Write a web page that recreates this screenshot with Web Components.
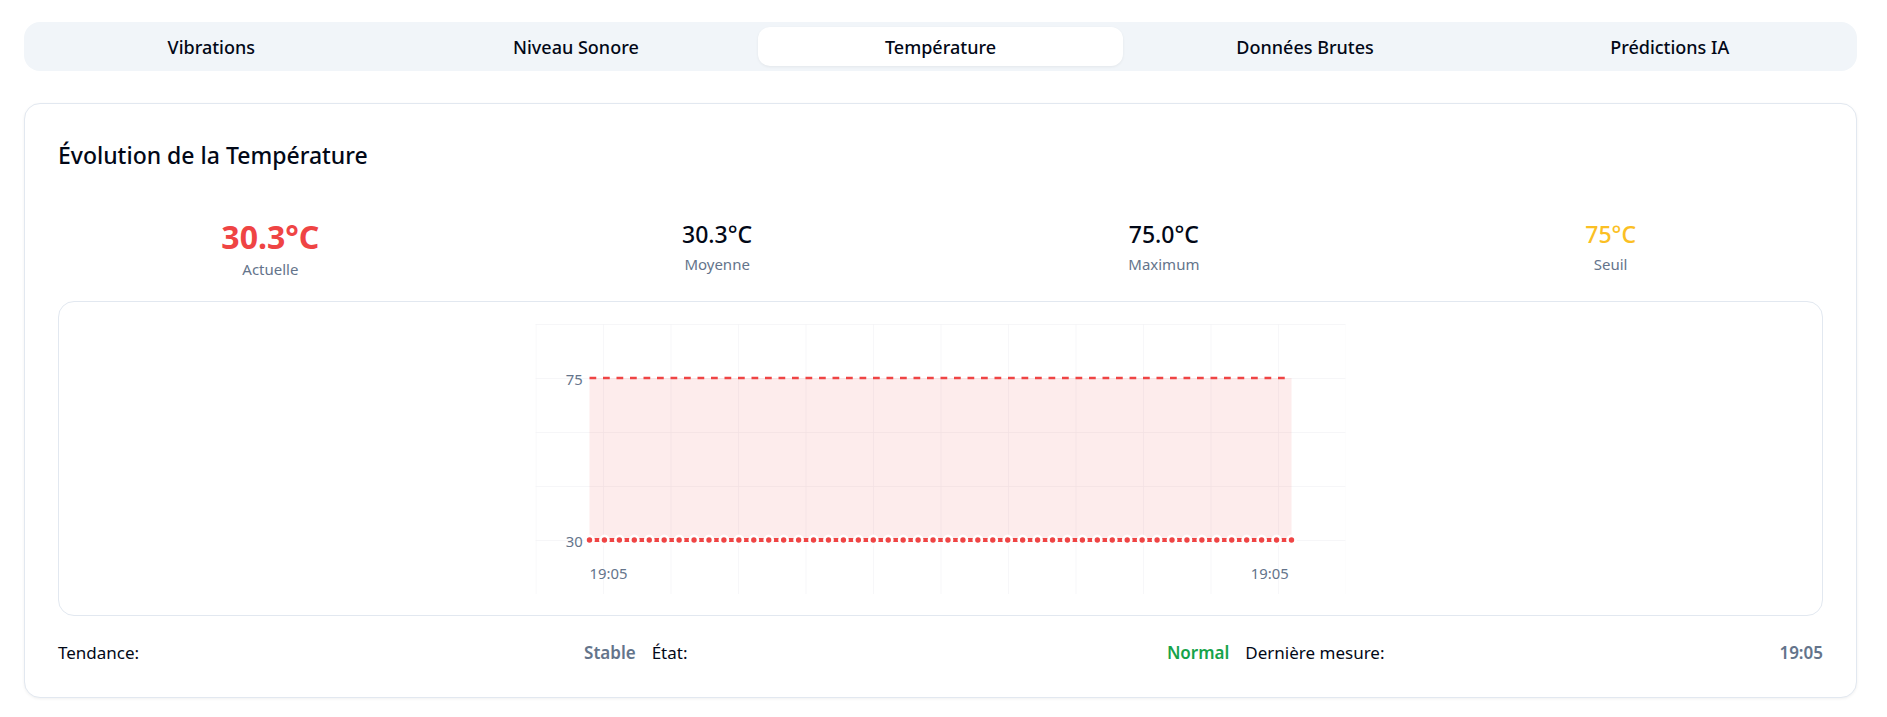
<!DOCTYPE html>
<html lang="fr">
<head>
<meta charset="utf-8">
<meta name="viewport" content="width=device-width, initial-scale=1">
<title>Évolution de la Température</title>
<style>
  :root {
    --fg: #020817;
    --muted: #64748b;
    --border: #e2e8f0;
    --tabs: #f1f5f9;
    --red: #ef4444;
    --amber: #fbbf24;
    --green: #16a34a;
  }
  body {
    margin: 0;
    background: #fff;
    color: var(--fg);
    font-family: "Noto Sans", "Segoe UI", sans-serif;
    font-size: 17px;
    line-height: 28px;
  }
</style>
</head>
<body>
<sensor-dashboard></sensor-dashboard>

<script>
class BaseElement extends HTMLElement {
  connectedCallback() {
    if (this.shadowRoot) return;
    this.attachShadow({ mode: 'open' }).innerHTML = this.render();
  }
}

customElements.define('tab-bar', class extends BaseElement {
  render() {
    return `
      <style>
        :host { display: block; }
        [role=tablist] {
          display: grid;
          grid-auto-flow: column;
          grid-auto-columns: 1fr;
          padding: 5px;
          background: var(--tabs);
          border-radius: 16px;
        }
      </style>
      <div role="tablist"><slot></slot></div>`;
  }
});

customElements.define('tab-item', class extends BaseElement {
  render() {
    const on = this.hasAttribute('selected');
    return `
      <style>
        :host { display: block; min-width: 0; }
        button {
          display: block;
          width: 100%;
          height: 39px;
          padding: 0 16px;
          border: 0;
          border-radius: 12px;
          background: transparent;
          color: var(--fg);
          font-family: inherit;
          font-size: 18px;
          font-weight: 500;
          line-height: 28px;
          white-space: nowrap;
          cursor: pointer;
        }
        button[aria-selected=true] {
          background: #fff;
          box-shadow: 0 1px 3px rgba(0, 0, 0, .06);
        }
      </style>
      <button type="button" role="tab" aria-selected="${on}"><slot></slot></button>`;
  }
});

customElements.define('panel-card', class extends BaseElement {
  render() {
    return `
      <style>
        :host {
          display: block;
          padding: 35px 33px 30px;
          border: 1px solid var(--border);
          border-radius: 16px;
          background: #fff;
          box-shadow: 0 1px 3px rgba(0, 0, 0, .06);
        }
        h3 { margin: 0 0 44px; font-size: 23px; font-weight: 500; line-height: 32px; }
      </style>
      <h3><slot name="title"></slot></h3>
      <slot></slot>`;
  }
});

customElements.define('stat-value', class extends BaseElement {
  render() {
    return `
      <style>
        :host { display: block; text-align: center; }
        .value { font-size: 23px; font-weight: 500; line-height: 38px; }
        :host([size=large]) .value { font-size: 32px; font-weight: 700; line-height: 43px; }
        :host([tone=red]) .value { color: var(--red); }
        :host([tone=amber]) .value { color: var(--amber); }
        .label { color: var(--muted); font-size: 15px; line-height: 22px; }
      </style>
      <div class="value"><slot></slot></div>
      <div class="label">${this.getAttribute('label')}</div>`;
  }
});

customElements.define('temperature-chart', class extends BaseElement {
  render() {
    const left = 40, right = 560, top = 40, base = 160, count = 48;
    const dots = Array.from({ length: count }, (_, i) => {
      const x = (left + i * (right - left) / (count - 1)).toFixed(2);
      return `<circle cx="${x}" cy="${base}" r="3"/>`;
    }).join('');
    return `
      <style>
        :host {
          display: block;
          padding: 22px 0 21px;
          border: 1px solid var(--border);
          border-radius: 16px;
        }
        svg { display: block; width: 100%; height: 270px; }
        text { font-size: 11px; fill: var(--muted); }
        .end { text-anchor: end; }
      </style>
      <svg viewBox="0 0 600 200" role="img" aria-label="Température">
        <defs>
          <pattern id="grid" width="50" height="40" patternUnits="userSpaceOnUse">
            <path d="M50 0H0V40" fill="none" stroke="#f3f4f6"/>
          </pattern>
        </defs>
        <rect width="600" height="200" fill="url(#grid)"/>
        <rect x="${left}" y="${top}" width="${right - left}" height="${base - top}" fill="#ef4444" fill-opacity=".1"/>
        <path d="M${left} ${top}H${right}" stroke="#ef4444" stroke-width="2" stroke-dasharray="5 5"/>
        <path d="M${left} ${base}H${right}" stroke="#ef4444" stroke-width="3"/>
        <g fill="#ef4444" stroke="#fff" stroke-width="2">${dots}</g>
        <text class="end" x="35" y="45">75</text>
        <text class="end" x="35" y="165">30</text>
        <text x="40" y="189">19:05</text>
        <text class="end" x="558" y="189">19:05</text>
      </svg>`;
  }
});

customElements.define('info-row', class extends BaseElement {
  render() {
    return `
      <style>
        :host { display: flex; justify-content: space-between; }
        strong { font-weight: 600; color: var(--muted); }
        :host([tone=green]) strong { color: var(--green); }
      </style>
      <span>${this.getAttribute('label')}</span>
      <strong><slot></slot></strong>`;
  }
});

customElements.define('sensor-dashboard', class extends BaseElement {
  render() {
    return `
      <style>
        :host { display: flex; flex-direction: column; gap: 32px; padding: 22px 30px 19px 24px; }
        .stats { display: grid; grid-template-columns: repeat(4, 1fr); gap: 22px; margin-bottom: 21px; }
        .info { display: grid; grid-template-columns: repeat(3, 1fr); gap: 16px; margin-top: 23px; }
      </style>
      <tab-bar>
        <tab-item>Vibrations</tab-item>
        <tab-item>Niveau Sonore</tab-item>
        <tab-item selected>Température</tab-item>
        <tab-item>Données Brutes</tab-item>
        <tab-item>Prédictions IA</tab-item>
      </tab-bar>
      <panel-card>
        <span slot="title">Évolution de la Température</span>
        <div class="stats">
          <stat-value size="large" tone="red" label="Actuelle">30.3°C</stat-value>
          <stat-value label="Moyenne">30.3°C</stat-value>
          <stat-value label="Maximum">75.0°C</stat-value>
          <stat-value tone="amber" label="Seuil">75°C</stat-value>
        </div>
        <temperature-chart></temperature-chart>
        <div class="info">
          <info-row label="Tendance:">Stable</info-row>
          <info-row label="État:" tone="green">Normal</info-row>
          <info-row label="Dernière mesure:">19:05</info-row>
        </div>
      </panel-card>`;
  }
});
</script>
</body>
</html>
